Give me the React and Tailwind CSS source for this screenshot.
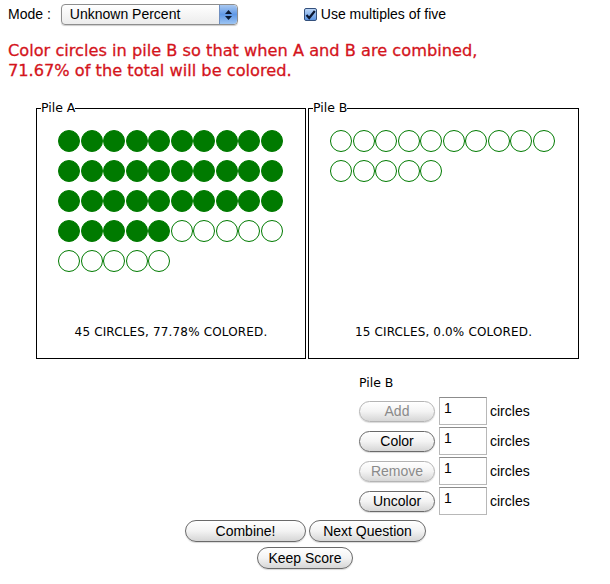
import React from 'react';

const Circle = ({ filled }) => (
    <div className="w-[22.5px] h-[22px] flex items-center justify-start">
        <div
            className={`w-[22px] h-[22px] rounded-full border border-[#007a00] ${filled ? 'bg-[#007a00]' : 'bg-white'}`}
        />
    </div>
);

const Pile = ({ label, total, colored, summary, width }) => (
    <div className={`relative border border-black h-[251px] flex flex-col ${width}`}>
        <span className="absolute -top-[8px] left-[4px] bg-white leading-[14px] text-[12.5px] text-black font-['DejaVu_Sans',sans-serif]">
            {label}
        </span>
        <div className="flex-1 pt-[21px] pl-[21px]">
            <div className="w-[226px] flex flex-wrap gap-y-[8px]">
                {Array.from({ length: total }).map((_, i) => (
                    <Circle key={i} filled={i < colored} />
                ))}
            </div>
        </div>
        <div className="text-center text-[12px] tracking-[0.15px] text-black mb-[17px] font-['DejaVu_Sans',sans-serif]">
            {summary}
        </div>
    </div>
);

const AquaButton = ({ children, disabled, className = '' }) => (
    <button
        className={`h-[21px] rounded-full border bg-gradient-to-b from-white via-[#f3f3f3] to-[#d6d6d6] text-[14px] leading-none font-['Liberation_Sans',sans-serif] shadow-[0_1px_1px_rgba(0,0,0,0.15)] ${disabled
            ? 'border-[#b4b4b4] text-[#8a8a8a]'
            : 'border-[#6a6a6a] text-black'
            } ${className}`}
    >
        {children}
    </button>
);

const CountRow = ({ label, disabled }) => (
    <div className="flex items-center h-[30px]">
        <AquaButton disabled={disabled} className="w-[76px]">
            {label}
        </AquaButton>
        <div className="ml-[4px] w-[48px] h-[28px] border border-[#b8b8b8] border-t-[#8c8c8c] bg-white pl-[4px] pt-[2px] text-[14px] leading-[16px] font-['Liberation_Sans',sans-serif]">
            1
        </div>
        <span className="ml-[3px] text-[14px] font-['Liberation_Sans',sans-serif]">circles</span>
    </div>
);

export default function App() {
    return (
        <div className="w-[610px] h-[584px] bg-white text-black font-['Liberation_Sans',sans-serif] overflow-hidden">
            {/* Top bar */}
            <div className="flex items-center h-[28px] pt-[1px]">
                <span className="ml-[8px] text-[14px]">Mode :</span>
                <div className="ml-[10px] w-[177px] h-[21px] rounded-[4px] border border-[#8e8e8e] bg-gradient-to-b from-white to-[#ececec] flex items-center shadow-[0_1px_1px_rgba(0,0,0,0.2)]">
                    <span className="ml-[8px] flex-1 text-[14px]">Unknown Percent</span>
                    <div className="w-[18px] h-full rounded-r-[4px] border-l border-[#6f8fc0] bg-gradient-to-b from-[#a9c8f0] via-[#5f98e6] to-[#9cc4f2] flex flex-col items-center justify-center gap-[2px]">
                        <svg width="7" height="4" viewBox="0 0 7 4"><path d="M3.5 0 L7 4 L0 4 Z" fill="#0b1a33" /></svg>
                        <svg width="7" height="4" viewBox="0 0 7 4"><path d="M0 0 L7 0 L3.5 4 Z" fill="#0b1a33" /></svg>
                    </div>
                </div>
                <div className="ml-[66px] w-[13px] h-[13px] rounded-[2px] border border-[#33507c] bg-gradient-to-b from-[#bcd6f6] to-[#5b93e0] flex items-center justify-center">
                    <svg width="11" height="10" viewBox="0 0 11 10">
                        <path d="M1.5 5 L4.2 8 L9.8 1" stroke="#0a1630" strokeWidth="2.2" fill="none" />
                    </svg>
                </div>
                <span className="ml-[4px] text-[14px]">Use multiples of five</span>
            </div>

            {/* Prompt */}
            <div className="mt-[13px] ml-[8px] text-[16.2px] leading-[20px] text-[#d4141c] font-['DejaVu_Sans',sans-serif] [-webkit-text-stroke:0.3px_#d4141c]">
                <div>Color circles in pile B so that when A and B are combined,</div>
                <div>71.67% of the total will be colored.</div>
            </div>

            {/* Piles */}
            <div className="flex gap-[2px] ml-[36px] mt-[27px]">
                <Pile label="Pile A" total={45} colored={35} summary="45 CIRCLES, 77.78% COLORED." width="w-[270px]" />
                <Pile label="Pile B" total={15} colored={0} summary="15 CIRCLES, 0.0% COLORED." width="w-[271px]" />
            </div>

            {/* Pile B controls */}
            <div className="ml-[359px] mt-[17px]">
                <div className="text-[12.5px] leading-[14px] font-['DejaVu_Sans',sans-serif]">Pile B</div>
                <div className="mt-[6px] flex flex-col">
                    <CountRow label="Add" disabled />
                    <CountRow label="Color" />
                    <CountRow label="Remove" disabled />
                    <CountRow label="Uncolor" />
                </div>
            </div>

            {/* Actions */}
            <div className="flex flex-col items-center mt-[4px] gap-[5px]">
                <div className="flex gap-[3px] pl-[1px]">
                    <AquaButton className="w-[121px] h-[22px]">Combine!</AquaButton>
                    <AquaButton className="w-[117px] h-[22px]">Next Question</AquaButton>
                </div>
                <AquaButton className="w-[96px] h-[22px]">Keep Score</AquaButton>
            </div>
        </div>
    );
}
